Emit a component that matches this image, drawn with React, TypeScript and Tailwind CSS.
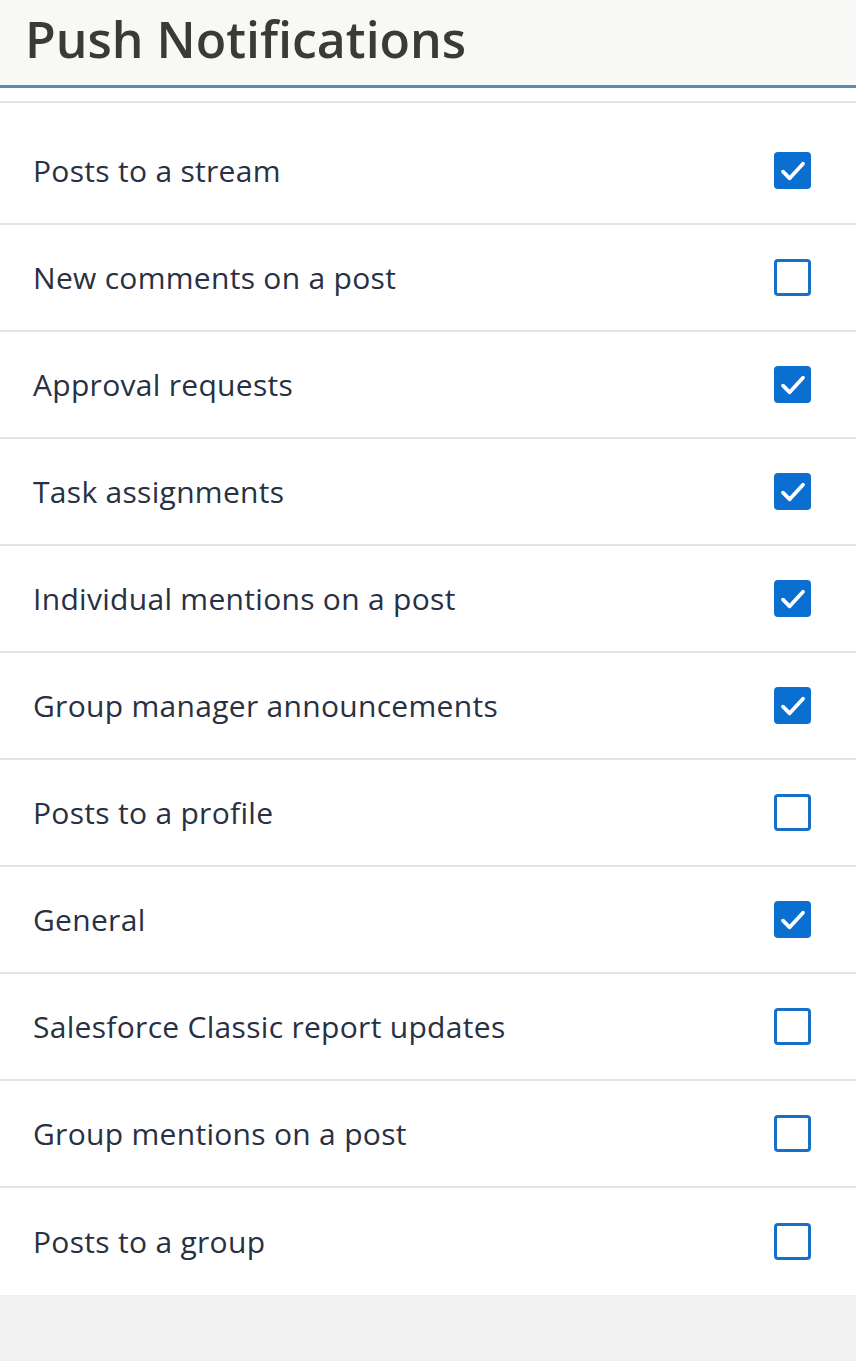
import React, { useState } from "react";

const initial = [
    { label: "Posts to a stream", on: true },
    { label: "New comments on a post", on: false },
    { label: "Approval requests", on: true },
    { label: "Task assignments", on: true },
    { label: "Individual mentions on a post", on: true },
    { label: "Group manager announcements", on: true },
    { label: "Posts to a profile", on: false },
    { label: "General", on: true },
    { label: "Salesforce Classic report updates", on: false },
    { label: "Group mentions on a post", on: false },
    { label: "Posts to a group", on: false },
];

function Box({ on }: { on: boolean }) {
    if (on) {
        return (
            <span className="w-[37px] h-[37px] rounded-[4px] bg-[#0b6fd1] flex items-center justify-center">
                <svg viewBox="0 0 24 24" className="w-[32px] h-[32px]" fill="none" stroke="#fff" strokeWidth="2.8" strokeLinecap="round" strokeLinejoin="round">
                    <path d="M4.5 12.5l5 5L19.5 6.5" />
                </svg>
            </span>
        );
    }
    return <span className="w-[37px] h-[37px] rounded-[4px] border-[3px] border-[#1670c8] bg-white" />;
}

export default function App() {
    const [items, setItems] = useState(initial);

    const toggle = (i: number) =>
        setItems((prev) => prev.map((it, j) => (j === i ? { ...it, on: !it.on } : it)));

    return (
        <div className="min-h-[1361px] bg-[#f1f1f1] font-['Open_Sans',sans-serif]">
            {/* Header */}
            <div className="h-[85px] bg-[#f8f8f6] px-[25px] flex items-center">
                <h1 className="text-[50px] font-semibold text-[#3a3a38] leading-none pb-[8px]">
                    Push Notifications
                </h1>
            </div>
            <div className="h-[3px] bg-[#5a8db0]" />
            <div className="h-[13px] bg-white border-b-2 border-[#e4e4e4] box-content" />

            {/* List */}
            <ul className="bg-white pt-[15px]">
                {items.map((it, i) => (
                    <li
                        key={it.label}
                        onClick={() => toggle(i)}
                        className={`h-[107px] flex items-center justify-between pl-[33px] pr-[45px] cursor-pointer ${
                            i < items.length - 1 ? "border-b-2 border-[#e4e4e4]" : ""
                        }`}
                    >
                        <span className="text-[30px] text-[#283043] tracking-[0.3px]">{it.label}</span>
                        <Box on={it.on} />
                    </li>
                ))}
            </ul>
        </div>
    );
}
